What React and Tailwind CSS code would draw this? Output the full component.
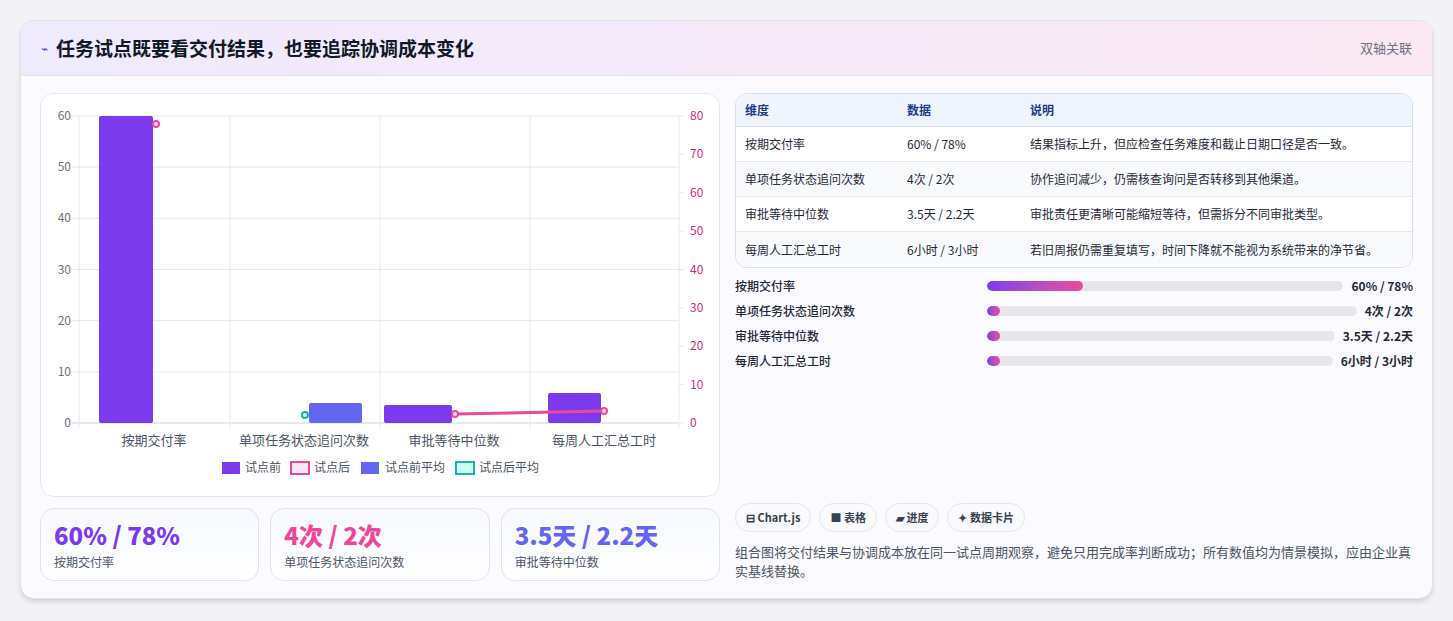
export default function App() {
  const font = { fontFamily: '"Noto Sans CJK SC","Noto Sans",sans-serif' };
  const X = (x) => x - 40, Y = (y) => y - 93;
  const plotL = 77, plotR = 678, plotT = 115, plotB = 422;
  const yL = (v) => plotB - (v / 60) * (plotB - plotT);
  const yR = (v) => plotB - (v / 80) * (plotB - plotT);
  const rows = [
    ["按期交付率", "60% / 78%", "结果指标上升，但应检查任务难度和截止日期口径是否一致。"],
    ["单项任务状态追问次数", "4次 / 2次", "协作追问减少，仍需核查询问是否转移到其他渠道。"],
    ["审批等待中位数", "3.5天 / 2.2天", "审批责任更清晰可能缩短等待，但需拆分不同审批类型。"],
    ["每周人工汇总工时", "6小时 / 3小时", "若旧周报仍需重复填写，时间下降就不能视为系统带来的净节省。"],
  ];
  const prog = [
    ["按期交付率", "60% / 78%", 27],
    ["单项任务状态追问次数", "4次 / 2次", 3],
    ["审批等待中位数", "3.5天 / 2.2天", 3],
    ["每周人工汇总工时", "6小时 / 3小时", 3],
  ];
  const cats = ["按期交付率", "单项任务状态追问次数", "审批等待中位数", "每周人工汇总工时"];
  return (
    <div className="w-[1453px] h-[621px] bg-[#f3f3f5] pt-[20px] px-[20px]" style={font}>
      <div className="w-[1413px] h-[579px] bg-[#fbfaff] rounded-[14px] border border-[#e2defa] overflow-hidden shadow-md">
        <div className="h-[55px] flex items-center justify-between px-[20px] bg-gradient-to-r from-[#efeafd] to-[#fbe8f3] border-b border-[#e5e1f5]">
          <div className="flex items-center gap-[8px]">
            <span className="text-[#4f46e5] text-[12px]">⌁</span>
            <span className="text-[19px] font-bold text-[#111827]">任务试点既要看交付结果，也要追踪协调成本变化</span>
          </div>
          <span className="text-[13px] text-[#6b7280]">双轴关联</span>
        </div>
        <div className="flex gap-[15px] px-[19px] pt-[17px]">
          <div className="w-[680px] flex flex-col gap-[11px]">
            <div className="h-[404px] bg-white rounded-[14px] border border-[#e2e8f0] overflow-hidden">
              <svg width="680" height="404" className="block">
                {[0, 10, 20, 30, 40, 50, 60].map((v) => (
                  <g key={v}>
                    <line x1={X(plotL - 6)} x2={X(plotR)} y1={Y(yL(v))} y2={Y(yL(v))} stroke={v === 0 ? "#cbd5e1" : "#e5e7eb"} />
                    <text x={X(70)} y={Y(yL(v)) + 4} textAnchor="end" fontSize="12" fill="#6b7280">{v}</text>
                  </g>
                ))}
                {[0, 10, 20, 30, 40, 50, 60, 70, 80].map((v) => (
                  <g key={v}>
                    <line x1={X(plotR)} x2={X(plotR + 5)} y1={Y(yR(v))} y2={Y(yR(v))} stroke="#e5e7eb" />
                    <text x={X(689)} y={Y(yR(v)) + 4} fontSize="12" fill="#db2777">{v}</text>
                  </g>
                ))}
                {[78, 229, 379, 529, 678].map((x) => (
                  <line key={x} x1={X(x)} x2={X(x)} y1={Y(plotT)} y2={Y(plotB + 6)} stroke="#e5e7eb" />
                ))}
                <rect x={X(98)} y={Y(yL(60))} width="54" height={plotB - yL(60)} rx="2" fill="#7c3aed" />
                <rect x={X(308)} y={Y(402)} width="53" height="20" rx="2" fill="#6366f1" />
                <rect x={X(383)} y={Y(404)} width="68" height="18" rx="2" fill="#7c3aed" />
                <rect x={X(547)} y={Y(392)} width="53" height="30" rx="2" fill="#7c3aed" />
                <line x1={X(454)} y1={Y(413)} x2={X(603)} y2={Y(410)} stroke="#ec4899" strokeWidth="3" />
                <circle cx={X(155)} cy={Y(123)} r="3" fill="#fce7f3" stroke="#ec4899" strokeWidth="2" />
                <circle cx={X(454)} cy={Y(413)} r="3" fill="#fce7f3" stroke="#ec4899" strokeWidth="2" />
                <circle cx={X(603)} cy={Y(410)} r="3" fill="#fce7f3" stroke="#ec4899" strokeWidth="2" />
                <circle cx={X(304)} cy={Y(414)} r="3" fill="#ccfbf1" stroke="#14b8a6" strokeWidth="2" />
                {cats.map((c, i) => (
                  <text key={c} x={X(153 + i * 150)} y={Y(444)} textAnchor="middle" fontSize="13" fill="#4b5563">{c}</text>
                ))}
                <g fontSize="12" fill="#4b5563">
                  <rect x={X(221)} y={Y(461)} width="18" height="12" fill="#7c3aed" />
                  <text x={X(244)} y={Y(471)}>试点前</text>
                  <rect x={X(290)} y={Y(461)} width="18" height="12" fill="#fce7f3" stroke="#ec4899" strokeWidth="2" />
                  <text x={X(313)} y={Y(471)}>试点后</text>
                  <rect x={X(360)} y={Y(461)} width="18" height="12" fill="#6366f1" />
                  <text x={X(384)} y={Y(471)}>试点前平均</text>
                  <rect x={X(455)} y={Y(461)} width="18" height="12" fill="#ccfbf1" stroke="#14b8a6" strokeWidth="2" />
                  <text x={X(478)} y={Y(471)}>试点后平均</text>
                </g>
              </svg>
            </div>
            <div className="grid grid-cols-3 gap-[11px]">
              {[["60% / 78%", "text-[#7c3aed]", "按期交付率"], ["4次 / 2次", "text-[#ec4899]", "单项任务状态追问次数"], ["3.5天 / 2.2天", "text-[#6366f1]", "审批等待中位数"]].map(([v, c, l]) => (
                <div key={l} className="h-[73px] rounded-[14px] border border-[#dbe4f5] bg-gradient-to-b from-[#f7f9ff] to-white px-[13px] pt-[10px]">
                  <div className={`text-[24px] font-extrabold leading-[32px] ${c}`}>{v}</div>
                  <div className="text-[12px] text-[#4b5563] mt-[2px]">{l}</div>
                </div>
              ))}
            </div>
          </div>
          <div className="w-[680px] flex flex-col">
            <div className="rounded-[12px] border border-[#d7e0ef] overflow-hidden bg-white">
              <div className="flex h-[33px] items-center bg-[#eef5ff] text-[12px] font-bold text-[#1e3a8a] border-b border-[#d7e0ef]">
                <div className="w-[171px] pl-[9px]">维度</div><div className="w-[123px]">数据</div><div>说明</div>
              </div>
              {rows.map((r, i) => (
                <div key={i} className={`flex h-[35px] items-center text-[12px] text-[#1f2937] ${i % 2 ? "bg-[#f8fafc]" : "bg-white"} ${i < 3 ? "border-b border-[#e5e7eb]" : ""}`}>
                  <div className="w-[171px] pl-[9px]">{r[0]}</div><div className="w-[123px]">{r[1]}</div><div>{r[2]}</div>
                </div>
              ))}
            </div>
            <div className="flex flex-col gap-[7px] mt-[9px]">
              {prog.map(([l, v, p]) => (
                <div key={l} className="flex items-center h-[18px] text-[12px] text-[#1f2937]">
                  <div className="w-[252px] font-medium">{l}</div>
                  <div className="flex-1 h-[10px] rounded-full bg-[#e5e7eb] mr-[8px] overflow-hidden">
                    <div className="h-full rounded-full bg-gradient-to-r from-[#7c3aed] to-[#ec4899]" style={{ width: p + "%", minWidth: "13px" }} />
                  </div>
                  <div className="font-bold">{v}</div>
                </div>
              ))}
            </div>
            <div className="flex gap-[8px] mt-[133px]">
              {["⊟ Chart.js", "■ 表格", "▰ 进度", "✦ 数据卡片"].map((t) => (
                <span key={t} className="h-[29px] px-[10px] flex items-center rounded-full border border-[#e5e7eb] bg-[#f8fafc] text-[11px] font-semibold text-[#374151]">{t}</span>
              ))}
            </div>
            <p className="text-[13px] leading-[19px] text-[#4b5563] mt-[10px]">组合图将交付结果与协调成本放在同一试点周期观察，避免只用完成率判断成功；所有数值均为情景模拟，应由企业真实基线替换。</p>
          </div>
        </div>
      </div>
    </div>
  );
}
